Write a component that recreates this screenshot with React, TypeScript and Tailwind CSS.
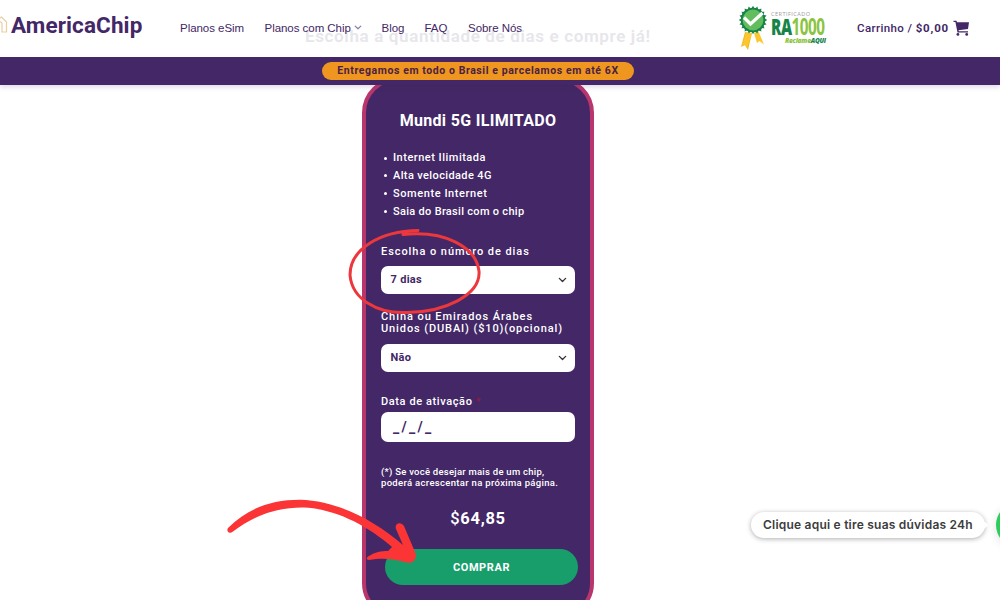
import React from "react";

const Chevron = ({ className }: { className: string }) => (
  <svg viewBox="0 0 10 6" className={className} fill="none" stroke="currentColor" strokeWidth="1.5" strokeLinecap="round" strokeLinejoin="round">
    <path d="M1.5 1.2 5 4.6 8.5 1.2" />
  </svg>
);

const teeth = Array.from({ length: 20 }, (_, i) => i * 18);

function Seal() {
  return (
    <svg viewBox="0 0 30 46" className="h-[46px] w-[30px] shrink-0">
      <path d="M7 27 3 42l4-2 3 5 4-17z" fill="#f4b824" />
      <path d="M16 28l3 10 2.500-2 4.500 3.500-5.500-13z" fill="#fbc62e" />
      <path d="M8 28 4 41l3-1 2 3 5-15z" fill="#fbc62e" />
      {teeth.map((a) => (
        <path key={a} d="M13 4 15 .8 17 4z" fill="#17824a" transform={`rotate(${a} 15 15)`} />
      ))}
      <circle cx="15" cy="15" r="12.2" fill="#17824a" />
      <circle cx="15" cy="15" r="10.4" fill="#62bd5c" />
      <path d="M6 12.5 12.5 19 24.5 8" fill="none" stroke="#fff" strokeWidth="3.2" />
    </svg>
  );
}

function Header() {
  return (
    <header className="relative flex h-[57px] items-center bg-white text-[#432766]">
      <div className="absolute left-[305px] top-[25px] whitespace-nowrap font-[Roboto] text-[17px] font-semibold leading-[22px] tracking-[0.64px] text-[#e7e6eb]">
        Escolha a quantidade de dias e compre já!
      </div>
      <div className="relative flex h-full w-[180px] items-center">
        <svg viewBox="0 0 8 18" className="mt-[-7px] h-[18px] w-2 shrink-0" fill="none" stroke="#e8cfa5" strokeWidth="1.2">
          <path d="M-1 2.5 1.5 1 6.5 6v10H2V7L0 5.5" />
        </svg>
        <span className="ml-[3px] mt-[-7px] font-[Roboto] text-[22.5px] font-bold leading-7 tracking-[0.1px]">AmericaChip</span>
      </div>
      <nav className="relative mt-[-2px] flex w-[557px] items-center whitespace-nowrap font-['Liberation_Sans'] text-[11.5px] leading-4 tracking-[-0.04px]">
        <span className="w-[84.5px]">Planos eSim</span>
        <span className="flex w-[117px] items-center">
          Planos com Chip
          <Chevron className="ml-[3px] h-[5px] w-[8px] opacity-60" />
        </span>
        <span className="w-[43px]">Blog</span>
        <span className="w-[43.5px]">FAQ</span>
        <span>Sobre Nós</span>
      </nav>
      <div className="relative flex w-[120px] items-center">
        <div className="mt-[-1px] pl-px"><Seal /></div>
        <div className="flex h-[40px] w-[58px] flex-col whitespace-nowrap pl-[3px] font-['Open_Sans']">
          <span className="mt-[2px] text-[5.5px] leading-[7px] tracking-[0.5px] text-[#9a9a9a]">CERTIFICADO</span>
          <span className="flex h-[18px] w-[80px] origin-left scale-x-[0.68] items-center text-[22.5px] font-extrabold leading-[18px] tracking-[-0.7px] text-[#168449]">
            RA<span className="font-bold text-[#8ac440]">1000</span>
          </span>
          <span className="mt-px pl-[14px] text-[6.5px] font-extrabold italic leading-[8px] tracking-[-0.2px] text-[#8ac440]">
            Reclame<span className="text-[#168449]">AQUI</span>
          </span>
        </div>
      </div>
      <div className="relative mt-[-2px] flex items-center whitespace-nowrap font-[Roboto] text-[11.5px] font-medium leading-4 tracking-[0.4px]">
        Carrinho /&nbsp;<b className="tracking-[0.8px]">$0,00</b>
        <svg viewBox="0 0 16 16" className="ml-1 h-4 w-[17px]" fill="#432766">
          <path d="M0 .7h3l.5 1.5H15.5L14.5 9 5 10.2l.3 1H14.5v1.3H4L1.9 2H0z" />
          <circle cx="4.4" cy="14.4" r="1.4" />
          <circle cx="13.2" cy="14.4" r="1.4" />
        </svg>
      </div>
    </header>
  );
}

const Select = ({ value }: { value: string }) => (
  <div className="flex h-7 items-center justify-between rounded-[7px] bg-white pl-[9.5px] pr-2 text-[11px] font-bold tracking-[0.3px] text-[#432766]">
    <span className="pt-px">{value}</span>
    <Chevron className="h-[6px] w-[9px] text-[#333]" />
  </div>
);

const features = [
  { text: "Internet Ilimitada", spacing: "tracking-[0.5px]" },
  { text: "Alta velocidade 4G", spacing: "tracking-[0.38px]" },
  { text: "Somente Internet", spacing: "tracking-[0.58px]" },
  { text: "Saia do Brasil com o chip", spacing: "tracking-[0.3px]" },
];

function PlanCard() {
  return (
    <section className="ml-[362px] mt-[-8px] h-[542px] w-[232px] whitespace-nowrap rounded-[36px] border-4 border-[#b8366b] bg-[#432766] px-[15px] pt-[28px] font-[Roboto] text-white">
      <h1 className="text-center text-[16px] font-bold leading-6 tracking-[0.32px]">Mundi 5G ILIMITADO</h1>
      <ul className="mt-[16.3px] text-[11px] font-medium leading-[17.8px]">
        {features.map((f) => (
          <li key={f.text} className="flex items-center">
            <span className="ml-[3px] mr-[6px] h-[3px] w-[3px] rounded-full bg-white" />
            <span className={f.spacing}>{f.text}</span>
          </li>
        ))}
      </ul>
      <div className="mt-[24.5px] text-[11px] font-medium leading-[14px] tracking-[0.94px]">Escolha o número de dias</div>
      <div className="mt-[7px]"><Select value="7 dias" /></div>
      <div className="mt-[17px] text-[11px] font-medium leading-3">
        <span className="tracking-[0.93px]">China ou Emirados Árabes</span><br /><span className="tracking-[0.89px]">Unidos (DUBAI) ($10)(opcional)</span>
      </div>
      <div className="mt-[9px]"><Select value="Não" /></div>
      <div className="mt-[22px] pt-px text-[11px] font-medium leading-[14px] tracking-[0.6px]">
        Data de ativação <span className="text-[#8c1d45]">*</span>
      </div>
      <div className="mt-[3px] flex h-[30.5px] items-center rounded-[7px] bg-white pl-3 text-[14px] font-bold tracking-[2.3px] text-[#432766]">_/_/_</div>
      <p className="mt-[23.5px] text-[9.5px] font-medium leading-[11.5px] tracking-[0.32px]">
        <span className="tracking-[0.25px]">(*) Se você desejar mais de um chip,</span><br />poderá acrescentar na próxima página.
      </p>
      <div className="mt-[20.5px] text-center text-[16.5px] font-bold leading-5 tracking-[0.7px]"><span className="font-medium">$</span>64,85</div>
      <button className="ml-1 mt-5 block h-9 w-[193px] rounded-full bg-[#189e6b] pt-[2px] text-[11px] font-bold tracking-[0.6px]">COMPRAR</button>
    </section>
  );
}

export default function App() {
  return (
    <div className="relative h-[600px] w-[1000px] overflow-hidden bg-white">
      <div className="relative z-10 shadow-[0_2px_5px_rgba(67,39,102,0.18)]">
        <Header />
        <div className="flex h-7 items-center bg-[#432766] pl-[322px]">
          <div className="flex h-[18px] w-[312px] items-center justify-center whitespace-nowrap rounded-full bg-[#ee961f] font-[Roboto] text-[10.5px] font-bold tracking-[0.58px] text-[#4c2143]">
            Entregamos em todo o Brasil e parcelamos em até 6X
          </div>
        </div>
      </div>
      <PlanCard />
      <svg viewBox="0 0 140 90" className="absolute left-[345px] top-[226px] h-[90px] w-[140px]" fill="none" stroke="#ec373d" strokeLinecap="round">
        <path d="M73 4.5C35 5 5 23 5 49C7 73 32 88 62 86.5C100 86 136 69 134 45C131 21 100 4 58 8.5" strokeWidth="3" />
      </svg>
      <svg viewBox="0 0 200 75" className="absolute left-[220px] top-[495px] h-[75px] w-[200px]" fill="#fb3535">
        <path d="M8 33C28 13 52 4.7 80 4.8C118 6 154 25 183 50L176 34C174 28 181 26 184 31L195 57C198 63 193 69 187 67.5C173 63.5 162 62.5 149 65C146 65 146 62.5 149 61C155 57 161 56 168 56L172 52C148 31 116 14 84 12.5C56 12 34 21 13 36.5C9 40 6 36 8 33Z" />
      </svg>
      <div className="absolute left-[751px] top-[512px] flex h-[26px] w-[234px] items-center whitespace-nowrap rounded-full bg-white pl-3 font-[Inter] text-[12px] font-semibold tracking-[0.22px] text-[#3c3c3c] shadow-[0_1px_5px_rgba(0,0,0,0.32)]">
        Clique aqui e tire suas dúvidas 24h
        <svg viewBox="0 0 8 12" className="absolute right-[-4px] top-[7px] h-3 w-2" fill="#fff">
          <path d="M0 0 8 6 0 12z" />
        </svg>
      </div>
      <div className="absolute left-[996px] top-[503px] h-[44px] w-[44px] rounded-full bg-[#2fcb5c] shadow-[0_2px_10px_rgba(0,0,0,0.12)]" />
    </div>
  );
}
